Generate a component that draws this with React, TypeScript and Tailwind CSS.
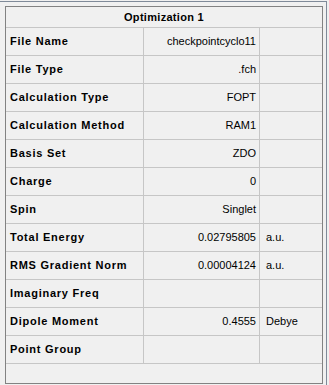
const rows: [string, string, string][] = [
  ["File Name", "checkpointcyclo11", ""],
  ["File Type", ".fch", ""],
  ["Calculation Type", "FOPT", ""],
  ["Calculation Method", "RAM1", ""],
  ["Basis Set", "ZDO", ""],
  ["Charge", "0", ""],
  ["Spin", "Singlet", ""],
  ["Total Energy", "0.02795805", "a.u."],
  ["RMS Gradient Norm", "0.00004124", "a.u."],
  ["Imaginary Freq", "", ""],
  ["Dipole Moment", "0.4555", "Debye"],
  ["Point Group", "", ""],
];

export default function App() {
  return (
    <div
      className="w-[329px] h-[385px] bg-[#f0f0f0] pt-px text-[11px] text-black overflow-hidden"
      style={{ fontFamily: "'Liberation Sans', Arial, sans-serif" }}
    >
      <div className="w-[327px] h-[384px] border-t border-r border-[#7f8a99] pt-[4px] pl-[5px]">
        <div className="w-[318px] h-[378px] border border-[#828282] flex flex-col">
          <div className="h-[21px] border-b border-[#c6c6c6] flex items-center justify-center font-bold tracking-[0.3px]">
            Optimization 1
          </div>
          {rows.map(([label, value, unit]) => (
            <div key={label} className="h-[28px] border-b border-[#c6c6c6] flex">
              <div className="w-[138px] border-r border-[#c6c6c6] flex items-center pl-[4px] font-bold tracking-[0.75px] pb-px">
                {label}
              </div>
              <div className="w-[116px] border-r border-[#c6c6c6] flex items-center justify-end pr-[3px] pb-px">
                {value}
              </div>
              <div className="flex-1 flex items-center pl-[6px] pb-px">{unit}</div>
            </div>
          ))}
        </div>
      </div>
    </div>
  );
}
